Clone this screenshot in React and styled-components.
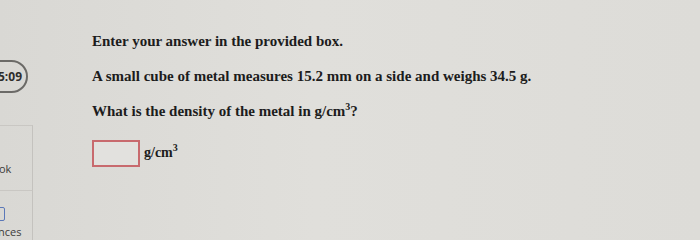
import React from 'react'
import styled, { createGlobalStyle } from 'styled-components'

const GlobalStyle = createGlobalStyle`
    html, body {
        margin: 0;
        padding: 0;
    }
    body {
        background: #dcdbd7;
    }
`

const Screen = styled.div`
    width: 700px;
    height: 240px;
    overflow: hidden;
    display: grid;
    grid-template-columns: 33px 1fr;
    background: linear-gradient(90deg, #d9d8d4 0%, #e0dfdb 45%, #dddcd8 100%);
`

const Sidebar = styled.div`
    display: flex;
    flex-direction: column;
    padding-top: 60px;
    overflow: hidden;
`

const TimerPill = styled.div`
    align-self: flex-end;
    margin-right: 5px;
    width: 60px;
    height: 33px;
    box-sizing: border-box;
    border: 2px solid #6b6a67;
    border-radius: 17px;
    display: flex;
    align-items: center;
    justify-content: flex-end;
    padding-right: 4px;
    font-family: "Open Sans", "Liberation Sans", sans-serif;
    font-weight: 700;
    font-size: 12px;
    color: #2e2d2b;
    flex-shrink: 0;
`

const SideCard = styled.div`
    height: ${props => props.height}px;
    margin-top: ${props => props.offset || 0}px;
    border-top: 1px solid #c9c7c3;
    border-right: 1px solid #c4c2be;
    display: flex;
    flex-direction: column;
    align-items: flex-end;
    justify-content: flex-end;
    padding-bottom: ${props => props.pad}px;
    box-sizing: border-box;
    flex-shrink: 0;
`

const SideLabel = styled.div`
    font-family: "Open Sans", "Liberation Sans", sans-serif;
    font-size: 11px;
    line-height: 13px;
    color: #3d3c3a;
    align-self: flex-start;
    margin-left: ${props => props.shift}px;
    white-space: nowrap;
`

const SideIcon = styled.div`
    align-self: flex-start;
    margin-left: -8px;
    width: 11px;
    height: 12px;
    border: 1.5px solid #5b78b8;
    border-radius: 2px;
    margin-bottom: 4px;
`

const Main = styled.div`
    padding: 33px 0 0 59px;
    font-family: "Liberation Serif", "Times New Roman", serif;
    font-weight: 700;
    font-size: 15px;
    color: #1c1c1c;
`

const Line = styled.p`
    margin: 0 0 ${props => props.gap}px;
    line-height: 17px;
    white-space: nowrap;
`

const Sup = styled.sup`
    font-size: 10px;
    line-height: 0;
`

const AnswerRow = styled.div`
    display: flex;
    align-items: flex-start;
    gap: 4px;
`

const AnswerBox = styled.div`
    width: 48px;
    height: 27px;
    box-sizing: border-box;
    border: 2px solid #c86a6e;
    background: #e2e1de;
`

const Unit = styled.span`
    font-size: 14px;
    line-height: 16px;
    padding-top: 5px;
`

export default function App() {
    return (
        <>
            <GlobalStyle />
            <Screen>
                <Sidebar>
                    <TimerPill>5:09</TimerPill>
                    <SideCard height={65} offset={32} pad={15}>
                        <SideLabel shift={-1}>ok</SideLabel>
                    </SideCard>
                    <SideCard height={50} pad={2}>
                        <SideIcon />
                        <SideLabel shift={-2}>nces</SideLabel>
                    </SideCard>
                </Sidebar>
                <Main>
                    <Line gap={18}>Enter your answer in the provided box.</Line>
                    <Line gap={18}>A small cube of metal measures 15.2 mm on a side and weighs 34.5 g.</Line>
                    <Line gap={20}>What is the density of the metal in g/cm<Sup>3</Sup>?</Line>
                    <AnswerRow>
                        <AnswerBox />
                        <Unit>g/cm<Sup>3</Sup></Unit>
                    </AnswerRow>
                </Main>
            </Screen>
        </>
    )
}
